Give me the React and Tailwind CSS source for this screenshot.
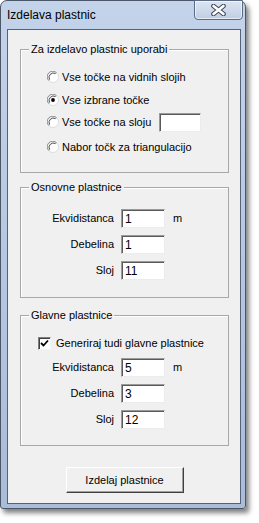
import React from 'react';

const font = "font-['Liberation_Sans',Arial,sans-serif]";

const Radio = ({ checked }) => (
    <svg width="12" height="12" viewBox="0 0 12 12" className="shrink-0">
        <circle cx="6" cy="6" r="5.5" fill="#fff" stroke="#dcdcdc" strokeWidth="1" />
        <path d="M1.8 9.6 A5.5 5.5 0 0 1 9.6 1.8" fill="none" stroke="#8c8c8c" strokeWidth="1" />
        <path d="M2.6 8.6 A4.4 4.4 0 0 1 8.6 2.6" fill="none" stroke="#4a4a4a" strokeWidth="1" />
        {checked && <circle cx="6" cy="6" r="1.9" fill="#000" />}
    </svg>
);

const Checkbox = () => (
    <span className="w-[13px] h-[13px] shrink-0 bg-white border-t border-l border-[#808080] border-b border-r border-b-[#f4f4f4] border-r-[#f4f4f4] shadow-[inset_1px_1px_0_#404040] flex items-center justify-center">
        <svg width="9" height="9" viewBox="0 0 9 9">
            <path d="M1 4 L3.5 6.5 L8 1.5" fill="none" stroke="#000" strokeWidth="1.8" />
        </svg>
    </span>
);

const Field = ({ value, w = 'w-[44px]' }) => (
    <div className={`${w} h-[19px] bg-white border-t border-l border-[#9a9a9a] border-b border-r border-b-[#ececec] border-r-[#ececec] shadow-[inset_1px_1px_0_#5a5a5a] pl-[3px] flex items-center text-[12px] leading-none`}>
        {value}
    </div>
);

const Group = ({ title, className, children }) => (
    <div className={`relative border border-[#a8a8a8] shadow-[inset_1px_1px_0_#fff] ${className}`}>
        <span className="absolute left-[8px] -top-[8px] px-[2px] bg-[#f0f0f0] leading-[14px]">{title}</span>
        {children}
    </div>
);

const Row = ({ label, value, unit }) => (
    <div className="flex items-center h-[19px]">
        <span className="w-[93px] text-right">{label}</span>
        <span className="ml-[7px]"><Field value={value} /></span>
        {unit && <span className="ml-[8px]">{unit}</span>}
    </div>
);

export default function App() {
    return (
        <div className={`w-[259px] h-[523px] bg-white ${font} text-[11px] text-black`}>
            <div className="w-[246px] h-[509px] rounded-t-[7px] rounded-b-[3px] border border-[#4b5668] bg-gradient-to-b from-[#c3d3ea] to-[#a9bcd8] shadow-[3px_4px_5px_rgba(0,0,0,0.5)] flex flex-col">
                {/* title bar */}
                <div className="h-[28px] flex items-start shrink-0">
                    <span className="pl-[6px] pt-[7px] text-[12px] leading-[14px]">Izdelava plastnic</span>
                    <div className="ml-auto mr-[2px] -mt-[1px] w-[49px] h-[20px] rounded-b-[4px] border border-[#5c6b84] bg-gradient-to-b from-[#dce5f2] to-[#c0cee3] shadow-[inset_0_0_0_1px_rgba(255,255,255,0.6)] flex items-center justify-center">
                        <svg width="17" height="12" viewBox="0 0 17 12">
                            <path d="M3.5 2 L13.5 10 M13.5 2 L3.5 10" stroke="#3d4657" strokeWidth="4.6" strokeLinecap="round" />
                            <path d="M3.5 2 L13.5 10 M13.5 2 L3.5 10" stroke="#fff" strokeWidth="2.6" strokeLinecap="round" />
                        </svg>
                    </div>
                </div>

                {/* client area */}
                <div className="flex-1 ml-[6px] mr-[4px] mb-[4px] border border-[#55627a] bg-[#f0f0f0] pl-[12px] pr-[11px] flex flex-col">
                    <Group title="Za izdelavo plastnic uporabi" className="mt-[19px] h-[124px]">
                        <div className="pl-[26px] pt-[16px] flex flex-col">
                            <div className="h-[22px] flex items-center gap-[3px]"><Radio /><span>Vse točke na vidnih slojih</span></div>
                            <div className="h-[22px] mt-[1px] flex items-center gap-[3px]"><Radio checked /><span>Vse izbrane točke</span></div>
                            <div className="h-[22px] flex items-center gap-[3px]">
                                <Radio /><span>Vse točke na sloju</span>
                                <span className="ml-[5px]"><Field value="" w="w-[42px]" /></span>
                            </div>
                            <div className="h-[22px] mt-[3px] flex items-center gap-[3px]"><Radio /><span>Nabor točk za triangulacijo</span></div>
                        </div>
                    </Group>

                    <Group title="Osnovne plastnice" className="mt-[14px] h-[111px]">
                        <div className="pt-[21px] flex flex-col gap-[7px]">
                            <Row label="Ekvidistanca" value="1" unit="m" />
                            <Row label="Debelina" value="1" />
                            <Row label="Sloj" value="11" />
                        </div>
                    </Group>

                    <Group title="Glavne plastnice" className="mt-[17px] h-[131px]">
                        <div className="pt-[21px] flex flex-col">
                            <div className="h-[13px] pl-[17px] flex items-center gap-[5px]">
                                <Checkbox /><span>Generiraj tudi glavne plastnice</span>
                            </div>
                            <div className="mt-[8px] flex flex-col gap-[7px]">
                                <Row label="Ekvidistanca" value="5" unit="m" />
                                <Row label="Debelina" value="3" />
                                <Row label="Sloj" value="12" />
                            </div>
                        </div>
                    </Group>

                    <div className="mt-[21px] flex justify-center">
                        <button className="w-[118px] h-[26px] bg-[#f0f0f0] border border-t-white border-l-white border-b-[#404040] border-r-[#404040] shadow-[inset_-1px_-1px_0_#a0a0a0] text-[11px]">
                            Izdelaj plastnice
                        </button>
                    </div>
                </div>
            </div>
        </div>
    );
}
